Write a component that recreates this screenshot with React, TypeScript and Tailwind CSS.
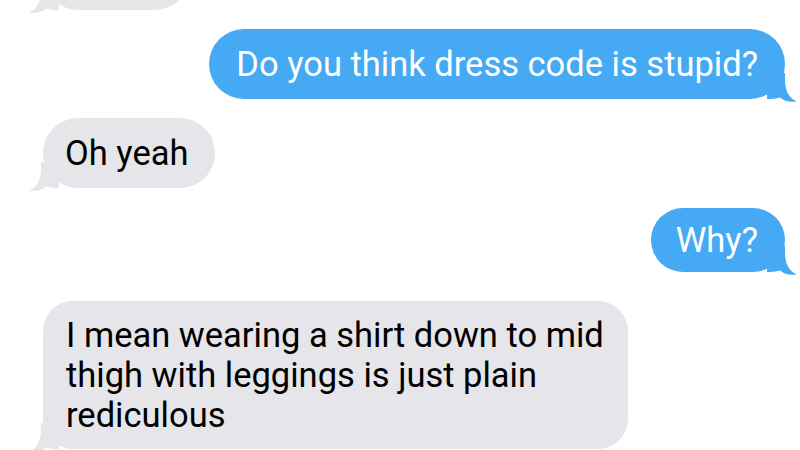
import React from "react";

type Side = "in" | "out";

const BLUE = "#45a9f4";
const GRAY = "#e5e5ea";

// iMessage style tail, drawn over the bottom corner of the bubble
function Tail({ side }: { side: Side }) {
  if (side === "out") {
    return (
      <svg
        className="absolute -right-[12px] -bottom-[4px] h-[30px] w-[30px]"
        viewBox="0 0 30 30"
      >
        <path
          d="M0 0 H18 V6 C18 17 21 24 29.5 28.5 C22 29.5 17 28 13 24.5 C9 26 4 26 0 26 Z"
          fill={BLUE}
        />
      </svg>
    );
  }
  return (
    <svg
      className="absolute -left-[14px] -bottom-[4px] h-[30px] w-[30px]"
      viewBox="0 0 30 30"
    >
      <path
        d="M30 0 H12 V6 C12 17 9 24 0.5 28.5 C8 29.5 13 28 17 24.5 C21 26 26 26 30 26 Z"
        fill={GRAY}
      />
    </svg>
  );
}

function Bubble({
  side,
  children,
  className = "",
}: {
  side: Side;
  children?: React.ReactNode;
  className?: string;
}) {
  const out = side === "out";
  return (
    <div className={out ? "flex justify-end pr-[15px]" : "flex justify-start pl-[43px]"}>
      <div
        className={
          "relative text-[34.5px] leading-[40px] " +
          (out ? "bg-[#45a9f4] text-white " : "bg-[#e5e5ea] text-black ") +
          className
        }
      >
        <Tail side={side} />
        <span className="relative">{children}</span>
      </div>
    </div>
  );
}

export default function App() {
  return (
    <div
      className="h-[450px] w-[800px] overflow-hidden bg-white"
      style={{ fontFamily: "Roboto, 'Liberation Sans', sans-serif" }}
    >
      <div className="flex flex-col">
        <div className="-mt-[60px] mb-[19px]">
          <Bubble side="in" className="h-[70px] w-[147px] rounded-[35px]" />
        </div>
        <div className="mb-[19px]">
          <Bubble side="out" className="rounded-[35px] px-[27px] py-[15px]">
            Do you think dress code is stupid?
          </Bubble>
        </div>
        <div className="mb-[20px]">
          <Bubble side="in" className="rounded-[35px] py-[15px] pl-[22px] pr-[27px]">
            Oh yeah
          </Bubble>
        </div>
        <div className="mb-[29px]">
          <Bubble side="out" className="rounded-[32px] py-[12px] pl-[25px] pr-[27px]">
            Why?
          </Bubble>
        </div>
        <div>
          <Bubble side="in" className="w-[585px] rounded-[30px] py-[14px] pl-[23px] pr-[20px]">
            I mean wearing a shirt down to mid thigh with leggings is just plain rediculous
          </Bubble>
        </div>
      </div>
    </div>
  );
}
